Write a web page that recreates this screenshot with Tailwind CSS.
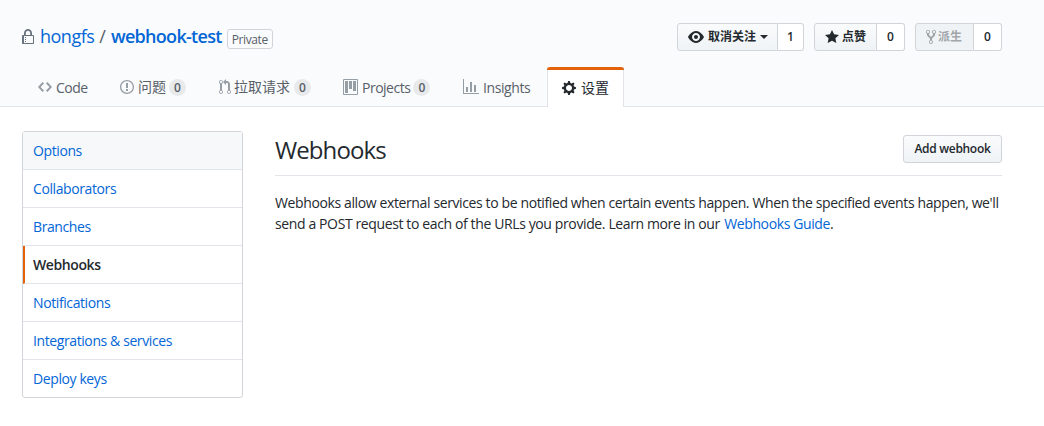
<!DOCTYPE html>
<html lang="en">
<head>
    <meta charset="UTF-8">
    <title>hongfs/webhook-test</title>
    <script src="https://cdn.jsdelivr.net/npm/@tailwindcss/browser@4"></script>
</head>
<body class="bg-white text-[#24292e] text-sm font-['Open_Sans','Noto_Sans_CJK_SC',sans-serif]">
    <!-- Repo header -->
    <div class="bg-[#fafbfc] border-b border-[#e1e4e8] h-[107px] pl-[22px]">
        <div class="w-[980px] flex justify-between pt-[23px] h-[67px]">
            <div class="flex items-center h-[28px] text-[18px] text-[#586069]">
                <svg class="w-[12px] h-[16px] fill-[#6a737d] mr-[6px]" viewBox="0 0 12 16"><path d="M4 13H3v-1h1v1zm8-6v7c0 .55-.45 1-1 1H1c-.55 0-1-.45-1-1V7c0-.55.45-1 1-1h1V4c0-2.2 1.8-4 4-4s4 1.8 4 4v2h1c.55 0 1 .45 1 1zM3.8 6h4.41V4c0-1.22-.98-2.2-2.2-2.2-1.22 0-2.2.98-2.2 2.2v2H3.8zM11 7H2v7h9V7zM4 8H3v1h1V8zm0 2H3v1h1v-1z"/></svg>
                <a class="text-[#0366d6] tracking-[-0.5px]">hongfs</a>
                <span class="mx-[5px]">/</span>
                <a class="text-[#0366d6] font-semibold tracking-[-0.7px]">webhook-test</a>
                <span class="ml-[5px] mt-[3px] border border-[#d1d5da] rounded-[3px] h-[20px] px-[4px] text-[12px] leading-[20px] text-[#586069] tracking-[-0.4px]">Private</span>
            </div>
            <div class="flex gap-[10px] text-[12px] font-semibold">
                <div class="flex h-[28px]">
                    <div class="flex items-center gap-[4px] w-[101px] pl-[10px] border border-[#d1d5da] rounded-l-[3px] bg-linear-to-b from-[#fafbfc] to-[#eff3f6]">
                        <svg class="w-[16px] h-[16px] fill-current" viewBox="0 0 16 16"><path d="M8.06 2C3 2 0 8 0 8s3 6 8.06 6C13 14 16 8 16 8s-3-6-7.94-6zM8 12c-2.2 0-4-1.78-4-4 0-2.2 1.8-4 4-4 2.22 0 4 1.8 4 4 0 2.22-1.78 4-4 4zm2-4c0 1.11-.89 2-2 2-1.11 0-2-.89-2-2 0-1.11.89-2 2-2 1.11 0 2 .89 2 2z"/></svg>
                        <span>取消关注</span>
                        <span class="border-x-[4px] border-t-[4px] border-x-transparent border-t-[#24292e]"></span>
                    </div>
                    <div class="w-[26px] flex items-center justify-center border border-l-0 border-[#d1d5da] rounded-r-[3px] bg-white text-[#24292e]">1</div>
                </div>
                <div class="flex h-[28px]">
                    <div class="flex items-center gap-[3px] w-[63px] pl-[10px] border border-[#d1d5da] rounded-l-[3px] bg-linear-to-b from-[#fafbfc] to-[#eff3f6]">
                        <svg class="w-[14px] h-[16px] fill-current" viewBox="0 0 14 16"><path d="M14 6l-4.9-.64L7 1 4.9 5.36 0 6l3.6 3.26L2.67 14 7 11.67 11.33 14l-.93-4.74L14 6z"/></svg>
                        <span>点赞</span>
                    </div>
                    <div class="w-[28px] flex items-center justify-center border border-l-0 border-[#d1d5da] rounded-r-[3px] bg-white">0</div>
                </div>
                <div class="flex h-[28px]">
                    <div class="flex items-center gap-[2px] w-[59px] pl-[10px] border border-[#d1d5da] rounded-l-[3px] bg-[#eff3f6] text-[#24292e]/40">
                        <svg class="w-[10px] h-[16px] fill-current" viewBox="0 0 10 16"><path d="M8 1a1.993 1.993 0 0 0-1 3.72V6L5 8 3 6V4.72A1.993 1.993 0 0 0 2 1a1.993 1.993 0 0 0-1 3.72V6.5l3 3v1.78A1.993 1.993 0 0 0 5 15a1.993 1.993 0 0 0 1-3.72V9.5l3-3V4.72A1.993 1.993 0 0 0 8 1zM2 4.2C1.34 4.2.8 3.65.8 3c0-.65.55-1.2 1.2-1.2.65 0 1.2.55 1.2 1.2 0 .65-.55 1.2-1.2 1.2zm3 10c-.66 0-1.2-.55-1.2-1.2 0-.65.55-1.2 1.2-1.2.65 0 1.2.55 1.2 1.2 0 .65-.55 1.2-1.2 1.2zm3-10c-.66 0-1.2-.55-1.2-1.2 0-.65.55-1.2 1.2-1.2.65 0 1.2.55 1.2 1.2 0 .65-.55 1.2-1.2 1.2z"/></svg>
                        <span>派生</span>
                    </div>
                    <div class="w-[28px] flex items-center justify-center border border-l-0 border-[#d1d5da] rounded-r-[3px] bg-white">0</div>
                </div>
            </div>
        </div>
        <!-- Tabs -->
        <nav class="flex h-[40px] text-[#586069]">
            <a class="flex items-center w-[82px] pl-[16px] gap-[4px]">
                <svg class="w-[14px] h-[16px] fill-[#959da5]" viewBox="0 0 14 16"><path d="M9.5 3L8 4.5 11.5 8 8 11.5 9.5 13 14 8 9.5 3zm-5 0L0 8l4.5 5L6 11.5 2.5 8 6 4.5 4.5 3z"/></svg>
                <span class="tracking-[-0.5px] mt-[1px]">Code</span>
            </a>
            <a class="flex items-center w-[99px] pl-[16px] gap-[3px]">
                <svg class="w-[14px] h-[16px] fill-[#959da5]" viewBox="0 0 14 16"><path d="M7 2.3c3.14 0 5.7 2.56 5.7 5.7s-2.56 5.7-5.7 5.7A5.71 5.71 0 0 1 1.3 8c0-3.14 2.56-5.7 5.7-5.7zM7 1C3.14 1 0 4.14 0 8s3.14 7 7 7 7-3.14 7-7-3.14-7-7-7zm1 3H6v5h2V4zm0 6H6v2h2v-2z"/></svg>
                <span class="ml-[1px]">问题</span>
                <span class="w-[17px] h-[17px] rounded-full bg-[#1b1f23]/8 text-[12px] leading-[17px] text-center font-semibold">0</span>
            </a>
            <a class="flex items-center w-[124px] pl-[16px] gap-[3px]">
                <svg class="w-[12px] h-[16px] fill-[#959da5]" viewBox="0 0 12 16"><path d="M11 11.28V5c-.03-.78-.34-1.47-.94-2.06C9.46 2.35 8.78 2.03 8 2H7V0L4 3l3 3V4h1c.27.02.48.11.69.31.21.2.3.42.31.69v6.28A1.993 1.993 0 0 0 10 15a1.993 1.993 0 0 0 1-3.72zm-1 2.92c-.66 0-1.2-.55-1.2-1.2 0-.65.55-1.2 1.2-1.2.65 0 1.2.55 1.2 1.2 0 .65-.55 1.2-1.2 1.2zM4 3c0-1.11-.89-2-2-2a1.993 1.993 0 0 0-1 3.72v6.56A1.993 1.993 0 0 0 2 15a1.993 1.993 0 0 0 1-3.72V4.72c.59-.34 1-.98 1-1.72zm-.8 10c0 .66-.55 1.2-1.2 1.2-.65 0-1.2-.55-1.2-1.2 0-.65.55-1.2 1.2-1.2.65 0 1.2.55 1.2 1.2zM2 4.2C1.34 4.2.8 3.65.8 3c0-.65.55-1.2 1.2-1.2.65 0 1.2.55 1.2 1.2 0 .65-.55 1.2-1.2 1.2z"/></svg>
                <span>拉取请求</span>
                <span class="ml-[1px] w-[17px] h-[17px] rounded-full bg-[#1b1f23]/8 text-[12px] leading-[17px] text-center font-semibold">0</span>
            </a>
            <a class="flex items-center w-[120px] pl-[16px] gap-[4px]">
                <svg class="w-[15px] h-[16px] fill-[#959da5]" viewBox="0 0 15 16"><path fill-rule="evenodd" d="M10 12h3V2h-3v10zm-4-2h3V2H6v8zm-4 4h3V2H2v12zm-1 1h13V1H1v14zM14 0H1a1 1 0 0 0-1 1v14a1 1 0 0 0 1 1h13a1 1 0 0 0 1-1V1a1 1 0 0 0-1-1z"/></svg>
                <span class="tracking-[-0.5px] mt-[1px]">Projects</span>
                <span class="ml-[-1px] w-[17px] h-[17px] rounded-full bg-[#1b1f23]/8 text-[12px] leading-[17px] text-center font-semibold">0</span>
            </a>
            <a class="flex items-center w-[100px] pl-[16px] gap-[4px]">
                <svg class="w-[16px] h-[16px] fill-[#959da5]" viewBox="0 0 16 16"><path d="M16 14v1H0V0h1v14h15zM5 13H3V8h2v5zm4 0H7V3h2v10zm4 0h-2V6h2v7z"/></svg>
                <span class="tracking-[-0.4px] mt-[1px]">Insights</span>
            </a>
            <a class="relative flex items-center gap-[5px] w-[77px] h-[40px] pl-[14px] pt-[1px] bg-white border-x border-[#e1e4e8] text-[#24292e]">
                <span class="absolute top-0 -left-[1px] -right-[1px] h-[3px] bg-[#e36209] rounded-t-[3px]"></span>
                <svg class="w-[14px] h-[16px] fill-current" viewBox="0 0 14 16"><path d="M14 8.77v-1.6l-1.94-.64-.45-1.09.88-1.84-1.13-1.13-1.81.91-1.09-.45-.69-1.92h-1.6l-.63 1.94-1.11.45-1.84-.88-1.13 1.13.91 1.81-.45 1.09L0 7.23v1.59l1.94.64.45 1.09-.88 1.84 1.13 1.13 1.81-.91 1.09.45.69 1.92h1.59l.63-1.94 1.11-.45 1.84.88 1.13-1.13-.92-1.81.47-1.09L14 8.75v.02zM7 11c-1.66 0-3-1.34-3-3s1.34-3 3-3 3 1.34 3 3-1.34 3-3 3z"/></svg>
                <span>设置</span>
            </a>
        </nav>
    </div>

    <!-- Settings page -->
    <div class="pl-[22px] pt-[24px]">
        <div class="w-[980px] flex items-start">
            <div class="w-[221px] shrink-0 border border-[#d1d5da] rounded-[3px] text-[#0366d6] tracking-[-0.4px] divide-y divide-[#e1e4e8]">
                <a class="block h-[38px] leading-[38px] pl-[10px] bg-[#f6f8fa]">Options</a>
                <a class="block h-[38px] leading-[38px] pl-[10px]">Collaborators</a>
                <a class="block h-[38px] leading-[38px] pl-[10px]">Branches</a>
                <a class="block h-[38px] leading-[38px] pl-[8px] border-l-2 border-l-[#e36209] font-semibold text-[#24292e]">Webhooks</a>
                <a class="block h-[38px] leading-[38px] pl-[10px]">Notifications</a>
                <a class="block h-[38px] leading-[38px] pl-[10px]">Integrations &amp; services</a>
                <a class="block h-[37px] leading-[38px] pl-[10px]">Deploy keys</a>
            </div>
            <div class="ml-[32px] flex-1">
                <div class="flex justify-between items-start h-[45px] pt-[3px] mb-[16px] border-b border-[#e1e4e8]">
                    <h2 class="text-[24px] leading-[32px] font-normal tracking-[-0.9px]">Webhooks</h2>
                    <button class="mt-[1px] w-[99px] h-[28px] border border-[#d1d5da] rounded-[3px] bg-linear-to-b from-[#fafbfc] to-[#eff3f6] text-[12px] font-semibold tracking-[-0.3px]">Add webhook</button>
                </div>
                <p class="leading-[21px] tracking-[-0.38px]">Webhooks allow external services to be notified when certain events happen. When the specified events happen, we'll send a POST request to each of the URLs you provide. Learn more in our <a class="ml-[1px] text-[#0366d6]">Webhooks Guide</a>.</p>
            </div>
        </div>
    </div>
</body>
</html>
